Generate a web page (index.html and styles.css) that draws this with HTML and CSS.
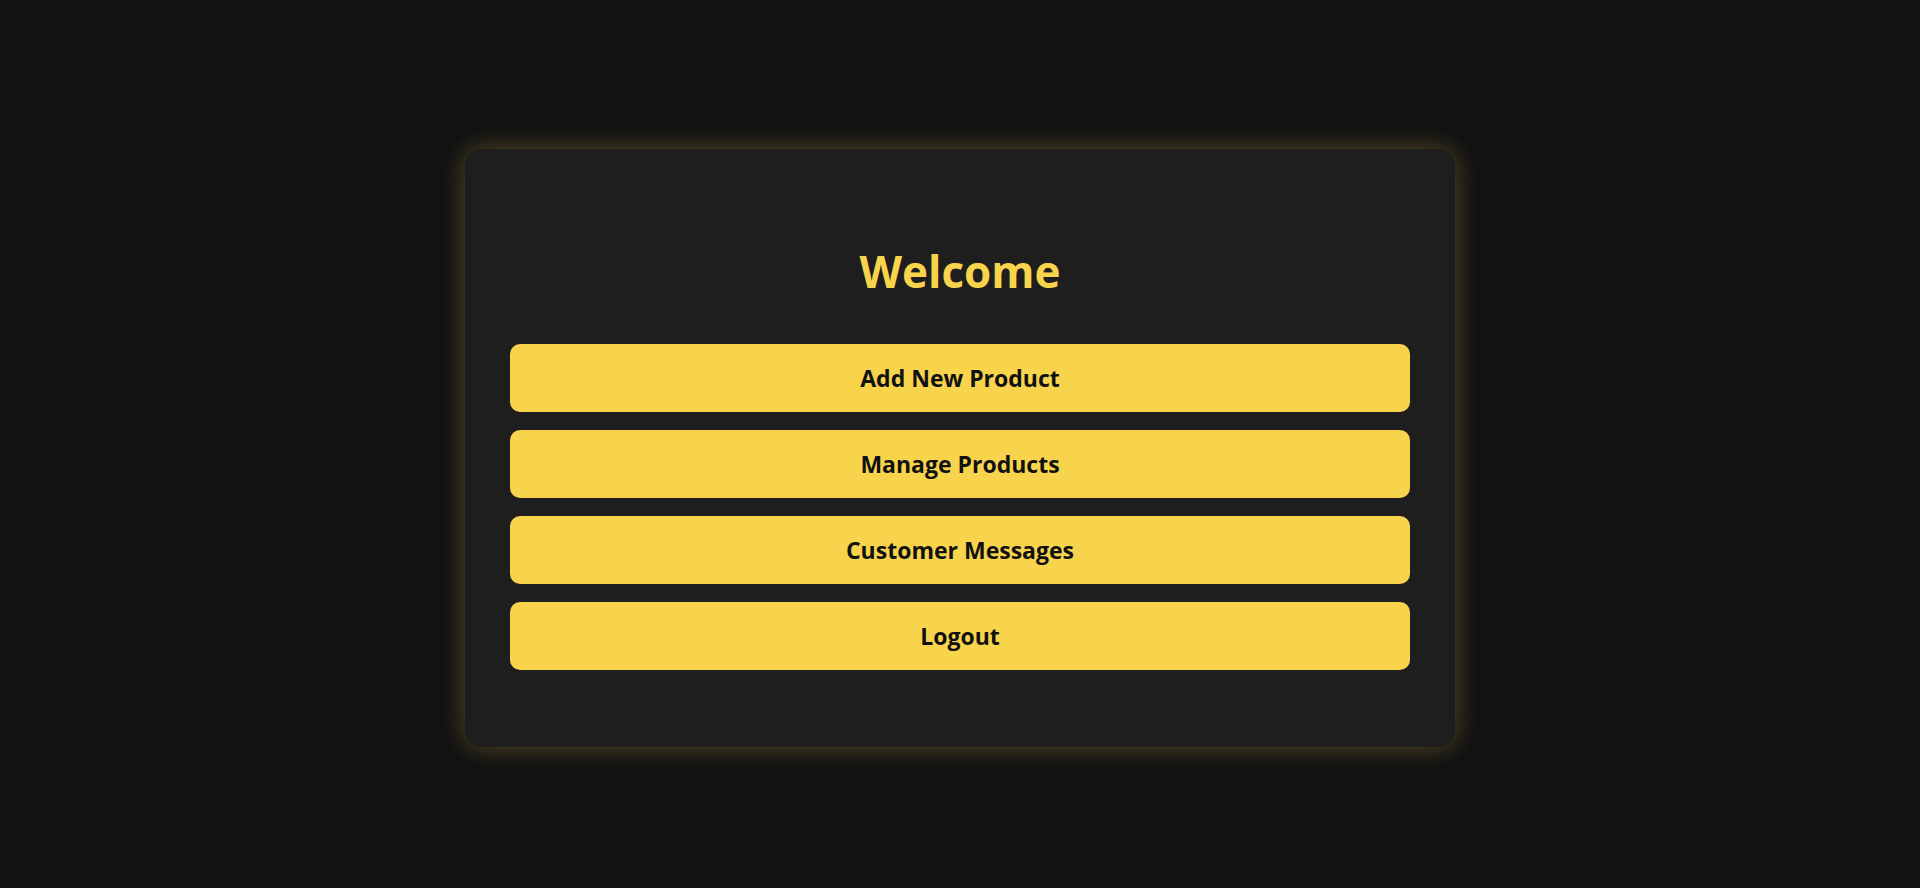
FILE: index.html
```html
<!DOCTYPE html>
<html lang="en">
<head>
<meta charset="utf-8">
<title>Dashboard</title>
<link rel="stylesheet" href="styles.css">
</head>
<body>
<main class="page">
  <section class="card">
    <h1 class="title">Welcome</h1>
    <nav class="actions">
      <a class="btn" href="#">Add New Product</a>
      <a class="btn" href="#">Manage Products</a>
      <a class="btn" href="#">Customer Messages</a>
      <a class="btn" href="#">Logout</a>
    </nav>
  </section>
</main>
</body>
</html>
```

FILE: styles.css
```css
* { box-sizing: border-box; }
html, body {
  margin: 0;
  height: 100%;
}
body {
  background: #121212;
  font-family: "Open Sans", "Noto Sans", sans-serif;
}
.page {
  min-height: 100%;
  display: flex;
  align-items: center;
  justify-content: center;
  padding-top: 8px;
}
.card {
  width: 990px;
  background: #1e1e1e;
  border-radius: 16px;
  box-shadow: 0 0 25px rgba(247, 211, 76, 0.3);
  padding: 94px 45px 77px;
}
.title {
  margin: 0 0 45px;
  text-align: center;
  color: #f8d44c;
  font-size: 44px;
  font-weight: 700;
  line-height: 56px;
}
.actions {
  display: flex;
  flex-direction: column;
  gap: 18px;
}
.btn {
  display: flex;
  align-items: center;
  justify-content: center;
  height: 68px;
  background: #f8d44c;
  color: #111111;
  border-radius: 10px;
  text-decoration: none;
  font-size: 23px;
  font-weight: 700;
}
```
